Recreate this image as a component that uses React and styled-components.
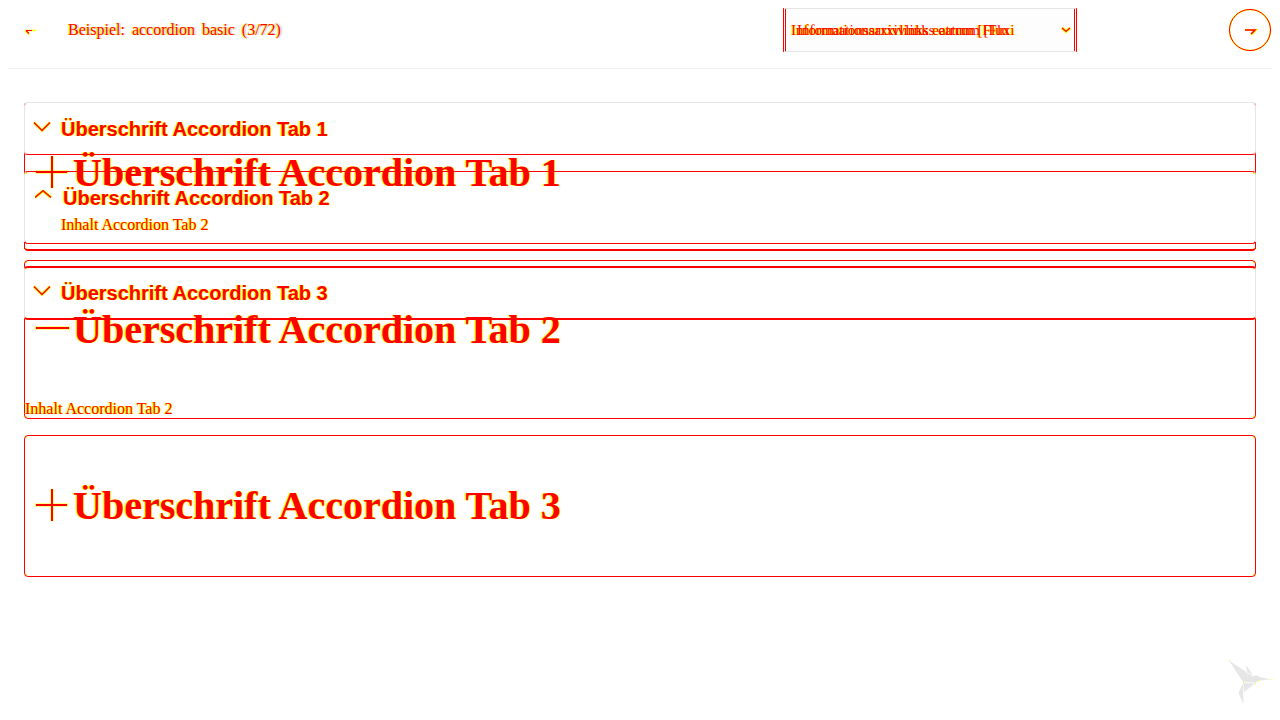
import React from "react";
import styled, { createGlobalStyle, css } from "styled-components";

const RED = "#ff0000";
const YELLOW = "#ffff00";
const GRAY = "#e5e5e5";

const GlobalStyle = createGlobalStyle`
  body {
    margin: 8px;
    background: #ffffff;
    color: ${RED};
    font-family: "Liberation Serif", serif;
    font-size: 16px;
  }
  *, *::before, *::after { box-sizing: border-box; }
`;

const fringe = css`
  text-shadow: 1px 0 ${YELLOW}, -1px 0 ${YELLOW};
`;

const Header = styled.header`
  display: flex;
  align-items: center;
  padding-bottom: 16px;
  border-bottom: 1px solid #f2f2f2;
`;

const BackLink = styled.a`
  display: flex;
  margin: 0 32px 0 16px;
`;

const Title = styled.div`
  display: flex;
  flex: 1;
  gap: 7px;
  line-height: 20px;
  white-space: nowrap;
  text-shadow: -1px 0 ${YELLOW}, 1px 0 #dddddd, 2px 0 #e6e6e6;
`;

const Picker = styled.label`
  position: relative;
  display: flex;
  width: 294px;
  margin-right: 152px;
`;

const Select = styled.select`
  appearance: none;
  width: 100%;
  height: 44px;
  margin: 0;
  padding: 0 5px;
  border: 1px solid ${GRAY};
  border-left: 3px double ${RED};
  border-right: 3px double ${RED};
  border-radius: 0;
  background: #fdfdfd;
  color: ${RED};
  font: 15px "Liberation Serif", serif;
  ${fringe}
`;

const PickerGhost = styled.span`
  position: absolute;
  left: 14px;
  top: 14px;
  font-size: 15px;
  line-height: 16px;
  white-space: nowrap;
  pointer-events: none;
`;

const PickerArrow = styled.svg`
  position: absolute;
  right: 5px;
  top: 18px;
  pointer-events: none;
`;

const NextButton = styled.button`
  display: flex;
  padding: 0;
  border: 0;
  background: none;
`;

const Main = styled.main`
  display: grid;
  padding: 33px 16px;
`;

const Stack = styled.div`
  grid-area: 1 / 1;
  display: flex;
  flex-direction: column;
  align-self: start;
`;

const yellowCorners = css`
  background:
    linear-gradient(${YELLOW}, ${YELLOW}) left top,
    linear-gradient(${YELLOW}, ${YELLOW}) right top,
    linear-gradient(${YELLOW}, ${YELLOW}) left bottom,
    linear-gradient(${YELLOW}, ${YELLOW}) right bottom;
  background-size: 3px 3px;
  background-repeat: no-repeat;
  background-origin: border-box;
`;

const Panel = styled.section`
  border: 1px solid ${RED};
  border-top-color: ${(p) => (p.$first ? GRAY : RED)};
  border-radius: 4px;
  margin-bottom: 16px;
  ${(p) => !p.$first && yellowCorners}
`;

const CompactPanel = styled(Panel)`
  border-left-color: ${GRAY};
  border-right-color: ${GRAY};
  border-top-width: ${(p) => (p.$last ? "2px" : "1px")};
  border-bottom-width: ${(p) => (p.$first ? "1px" : "2px")};
  margin-bottom: ${(p) => (p.$open ? "15px" : "16px")};
`;

const PanelFoot = styled.div`
  height: 7px;
  margin: 0 -1px;
  border: solid ${RED};
  border-width: 0 1px;
`;

const Heading = styled.h2`
  margin: 0;
  font-size: inherit;
`;

const Toggle = styled.button`
  display: flex;
  align-items: center;
  width: 100%;
  margin: 0;
  border: 0;
  background: none;
  color: ${RED};
  text-align: left;
  font-weight: bold;
  white-space: nowrap;
  ${fringe}
`;

const LargeToggle = styled(Toggle)`
  gap: 2px;
  padding: ${(p) => (p.$open ? "46px 10px 47px" : "47px 10px")};
  font-family: "Liberation Serif", serif;
  font-size: 40px;
  line-height: 46px;
`;

const CompactToggle = styled(Toggle)`
  gap: 10px;
  padding: ${(p) => (p.$open ? "15px 10px 6px" : p.$last ? "14px 8px 13px" : "15px 8px 13px")};
  font-family: "Liberation Sans", sans-serif;
  font-size: 20px;
  line-height: 23px;
`;

const LargeContent = styled.div`
  line-height: 18px;
  ${fringe}
`;

const CompactContent = styled.div`
  padding: 0 36px 8px;
  line-height: 18px;
  ${fringe}
`;

const Bird = styled.svg`
  position: fixed;
  right: 8px;
  bottom: 15px;
`;

function Outlined({ d }) {
  return (
    <>
      <path d={d} fill="none" stroke={YELLOW} strokeWidth="3" />
      <path d={d} fill="none" stroke={RED} strokeWidth="1.5" />
    </>
  );
}

function Sign({ open }) {
  return (
    <svg width="36" height="36" viewBox="0 0 36 36" aria-hidden="true">
      <path d={open ? "M0 16H35" : "M0 17H33M17 1V33"} stroke={YELLOW} strokeWidth="3" />
      <path d={open ? "M1 16H34" : "M1 17H32M17 1V33"} stroke={RED} strokeWidth="2" />
    </svg>
  );
}

function Chevron({ up }) {
  return (
    <svg width="18" height="18" viewBox="0 0 18 18" aria-hidden="true">
      <Outlined d={up ? "M0 7.500L8 0.800L16 7.500" : "M1 1.500L9 9.500L17 1.500"} />
    </svg>
  );
}

const tabs = [1, 2, 3];

export default function App() {
  return (
    <>
      <GlobalStyle />
      <Header>
        <BackLink href="#back" aria-label="Zurück">
          <svg width="12" height="12" viewBox="0 0 12 12" fill="none">
            <path d="M1 6L5 1" stroke={GRAY} />
            <path d="M1 6.500H12M1 6.500L5 11" stroke={YELLOW} strokeWidth="1.500" />
            <path d="M2 6.500H8M2 6.500L5 9.500" stroke={RED} strokeWidth="1.200" />
          </svg>
        </BackLink>
        <Title>
          <span>Beispiel:</span>
          <span>accordion</span>
          <span>basic</span>
          <span>(3/72)</span>
        </Title>
        <Picker>
          <Select aria-label="Beispiel">
            <option>Informationsarxivlinks eatrum [Fluxi</option>
          </Select>
          <PickerGhost aria-hidden="true">Informationsarxivlinks eatrum [Flu</PickerGhost>
          <PickerArrow width="12" height="8" viewBox="0 0 12 8" fill="none">
            <path d="M2 2L6 5.500L10 2" stroke={YELLOW} strokeWidth="3" />
            <path d="M2 2L6 5.500L10 2" stroke={RED} strokeWidth="1.300" />
          </PickerArrow>
        </Picker>
        <NextButton aria-label="Weiter">
          <svg width="43" height="44" viewBox="0 0 43 44" fill="none">
            <circle cx="21" cy="22" r="20.500" stroke={YELLOW} strokeWidth="1.500" />
            <circle cx="21" cy="22" r="20.500" stroke={RED} strokeWidth="1" />
            <path d="M22 17L26 21" stroke={GRAY} />
            <path d="M16 22H27L22 27" stroke={YELLOW} strokeWidth="2" />
            <path d="M16 22H26L22 26" stroke={RED} strokeWidth="1.500" />
          </svg>
        </NextButton>
      </Header>
      <Main>
        <Stack>
          {tabs.map((n) => (
            <Panel key={n} $first={n === 1}>
              <Heading>
                <LargeToggle type="button" $open={n === 2} aria-expanded={n === 2}>
                  <Sign open={n === 2} />
                  Überschrift Accordion Tab {n}
                </LargeToggle>
              </Heading>
              {n === 2 && <LargeContent>Inhalt Accordion Tab 2</LargeContent>}
            </Panel>
          ))}
        </Stack>
        <Stack>
          {tabs.map((n) => (
            <CompactPanel key={n} $first={n === 1} $open={n === 2} $last={n === 3}>
              <Heading>
                <CompactToggle
                  type="button"
                  $open={n === 2}
                  $last={n === 3}
                  aria-expanded={n === 2}
                >
                  <Chevron up={n === 2} />
                  Überschrift Accordion Tab {n}
                </CompactToggle>
              </Heading>
              {n === 2 && (
                <>
                  <CompactContent>Inhalt Accordion Tab 2</CompactContent>
                  <PanelFoot />
                </>
              )}
            </CompactPanel>
          ))}
        </Stack>
      </Main>
      <Bird width="44" height="46" viewBox="0 0 44 46" aria-hidden="true">
        <g fill="#e6e6e6">
          <path d="M1 1.500L25 17.500L28 16L33 18.500L43 20.300L31 21.500L27 24L24 24L15 23Z" />
          <path d="M18 6L25 16L19 13Z" />
          <path d="M15 24L27 24.500L16 33Z" />
          <path d="M15 24L10.500 34L15.500 45Z" />
        </g>
        <path d="M18 13L20 17M15 23.500H27M15.500 24V33" stroke="#fafafa" strokeWidth="0.500" fill="none" />
        <g fill={YELLOW}>
          <rect x="1" y="1" width="1" height="1" />
          <rect x="15" y="23" width="1" height="1" />
          <rect x="27" y="24" width="1" height="1" />
          <rect x="31" y="21" width="1" height="1" />
          <rect x="42" y="20" width="1" height="1" />
        </g>
      </Bird>
    </>
  );
}
